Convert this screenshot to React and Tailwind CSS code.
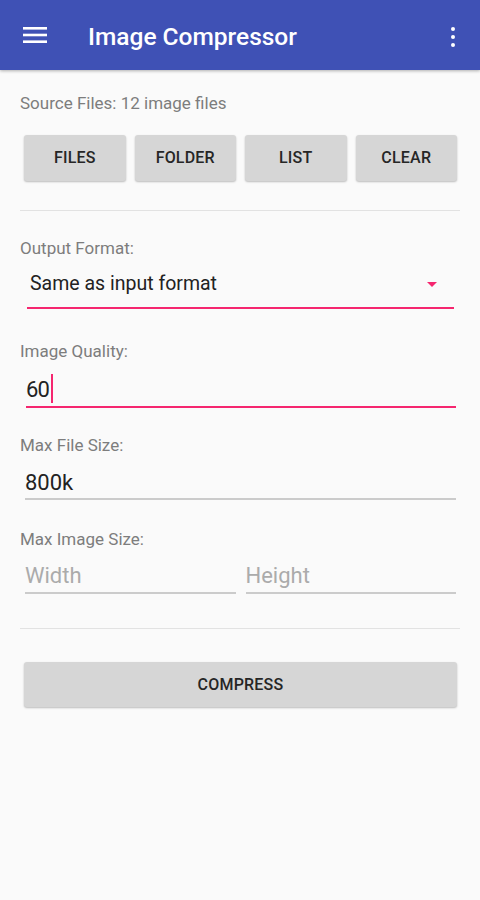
import React, { useState } from 'react';

const font = { fontFamily: 'Roboto, "Noto Sans", sans-serif' };
const pink = 'border-[#f5266f]';

function ActionButton({ label, className = '' }) {
  return (
    <button
      className={`rounded-[3px] bg-[#d6d6d6] text-[16px] font-medium tracking-[0.2px] text-[#262626] shadow-[0_1px_2px_rgba(0,0,0,0.25)] ${className}`}
    >
      {label}
    </button>
  );
}

function FieldLabel({ children, className = '' }) {
  return <div className={`text-[17px] leading-[20px] text-[#7d7d7d] ${className}`}>{children}</div>;
}

export default function App() {
  const [maxSize, setMaxSize] = useState('800k');

  return (
    <div className="min-h-[900px] w-[480px] bg-[#fafafa]" style={font}>
      {/* Toolbar */}
      <div className="flex h-[70px] items-center bg-[#3f51b5] pl-[23px] text-white shadow-[0_1px_3px_rgba(0,0,0,0.3)]">
        <svg width="24" height="16" viewBox="0 0 24 16" fill="white">
          <rect x="0" y="0" width="24" height="2.6" />
          <rect x="0" y="6.7" width="24" height="2.6" />
          <rect x="0" y="13.4" width="24" height="2.6" />
        </svg>
        <h1 className="ml-[41px] flex-1 pt-[4px] text-[24.5px] font-medium leading-none">Image Compressor</h1>
        <div className="mr-[25px] mt-[4px] flex flex-col items-center gap-[3.5px]">
          <span className="h-[4.5px] w-[4.5px] rounded-full bg-white" />
          <span className="h-[4.5px] w-[4.5px] rounded-full bg-white" />
          <span className="h-[4.5px] w-[4.5px] rounded-full bg-white" />
        </div>
      </div>

      <div className="px-[20px]">
        <FieldLabel className="pt-[23px]">Source Files: 12 image files</FieldLabel>

        <div className="mt-[22px] grid h-[46px] grid-cols-4 gap-[9px] pl-[4px] pr-[3px]">
          <ActionButton label="FILES" />
          <ActionButton label="FOLDER" />
          <ActionButton label="LIST" />
          <ActionButton label="CLEAR" />
        </div>

        <div className="mt-[29px] h-px bg-[#e2e2e2]" />

        {/* Output format */}
        <FieldLabel className="mt-[27px]">Output Format:</FieldLabel>
        <div className={`ml-[7px] mr-[6px] mt-[14px] flex h-[37px] items-start border-b-2 ${pink} pl-[3px]`}>
          <span className="flex-1 text-[19.5px] leading-[24px] text-[#222]">Same as input format</span>
          <svg width="10" height="5" viewBox="0 0 10 5" className="mr-[17px] mt-[10px]">
            <path d="M0 0 L10 0 L5 5 Z" fill="#f5266f" />
          </svg>
        </div>

        {/* Image quality */}
        <FieldLabel className="mt-[32px]">Image Quality:</FieldLabel>
        <div className={`ml-[6px] mr-[4px] mt-[16px] flex h-[31px] items-start border-b-2 ${pink}`}>
          <span className="text-[22px] leading-[26px] tracking-[-0.8px] text-[#222]">60</span>
          <span className="ml-[2px] mt-[-3px] h-[29px] w-[2px] bg-[#f5266f]" />
        </div>

        {/* Max file size */}
        <FieldLabel className="mt-[27px]">Max File Size:</FieldLabel>
        <div className="ml-[5px] mr-[4px] mt-[15px] flex h-[30px] items-start border-b-2 border-[#cbcbcb]">
          <input
            value={maxSize}
            onChange={(e) => setMaxSize(e.target.value)}
            className="w-full bg-transparent text-[22px] leading-[26px] text-[#222] outline-none"
          />
        </div>

        {/* Max image size */}
        <FieldLabel className="mt-[29px]">Max Image Size:</FieldLabel>
        <div className="ml-[5px] mr-[4px] mt-[14px] grid grid-cols-2 gap-[10px]">
          <div className="flex h-[31px] items-start border-b-2 border-[#cbcbcb]">
            <input
              placeholder="Width"
              className="w-full bg-transparent text-[22px] leading-[26px] text-[#222] outline-none placeholder:text-[#ababab]"
            />
          </div>
          <div className="flex h-[31px] items-start border-b-2 border-[#cbcbcb]">
            <input
              placeholder="Height"
              className="w-full bg-transparent text-[22px] leading-[26px] text-[#222] outline-none placeholder:text-[#ababab]"
            />
          </div>
        </div>

        <div className="mt-[34px] h-px bg-[#e2e2e2]" />

        <div className="mt-[33px] pl-[4px] pr-[3px]">
          <ActionButton label="COMPRESS" className="h-[45px] w-full text-[16.5px]" />
        </div>
      </div>
    </div>
  );
}
